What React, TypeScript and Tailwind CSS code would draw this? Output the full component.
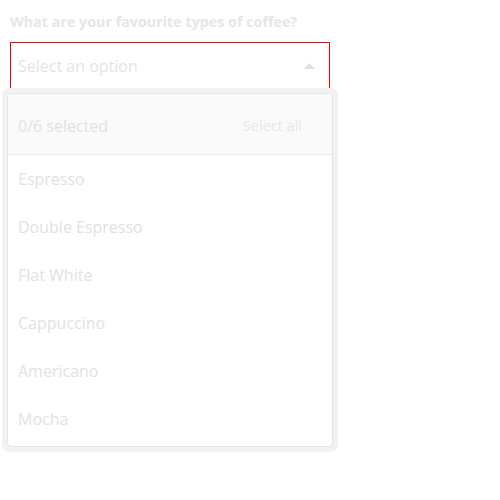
const coffees = ["Espresso", "Double Espresso", "Flat White", "Cappuccino", "Americano", "Mocha"];

export default function App() {
  return (
    <div className="min-h-screen bg-white p-[10px] font-['Open_Sans',sans-serif]">
      <label className="block text-[14.3px] font-bold leading-[24px] text-[#e6e6e6]">
        What are your favourite types of coffee?
      </label>
      <div className="relative mt-[8px] w-[320px]">
        <div className="flex h-[48px] items-center justify-between border border-[#ff0000] pl-[7px] pr-[14px]">
          <span className="text-[16px] text-[#e4e4e4]">Select an option</span>
          <svg width="11" height="6" viewBox="0 0 11 6">
            <path d="M0 6 L5.5 0 L11 6 Z" fill="#e0e0e0" />
          </svg>
        </div>
        <div className="absolute left-[-8px] top-[46px] w-[336px] rounded-[7px] bg-[#f2f2f2] p-[5px]">
          <div className="overflow-hidden rounded-[4px] border border-[#e6e6e6] bg-white pb-[3px]">
            <div className="flex h-[61px] items-center justify-between border-b border-[#ececec] bg-[#fafafa] pl-[10px] pr-[30px] pt-[3px]">
              <span className="text-[16px] text-[#e2e2e2]">0/6 selected</span>
              <span className="text-[14.5px] text-[#e8e8e8]">Select all</span>
            </div>
            {coffees.map((c) => (
              <div key={c} className="flex h-[48px] items-center pl-[10px] text-[16px] text-[#e2e2e2]">
                {c}
              </div>
            ))}
          </div>
        </div>
      </div>
    </div>
  );
}
